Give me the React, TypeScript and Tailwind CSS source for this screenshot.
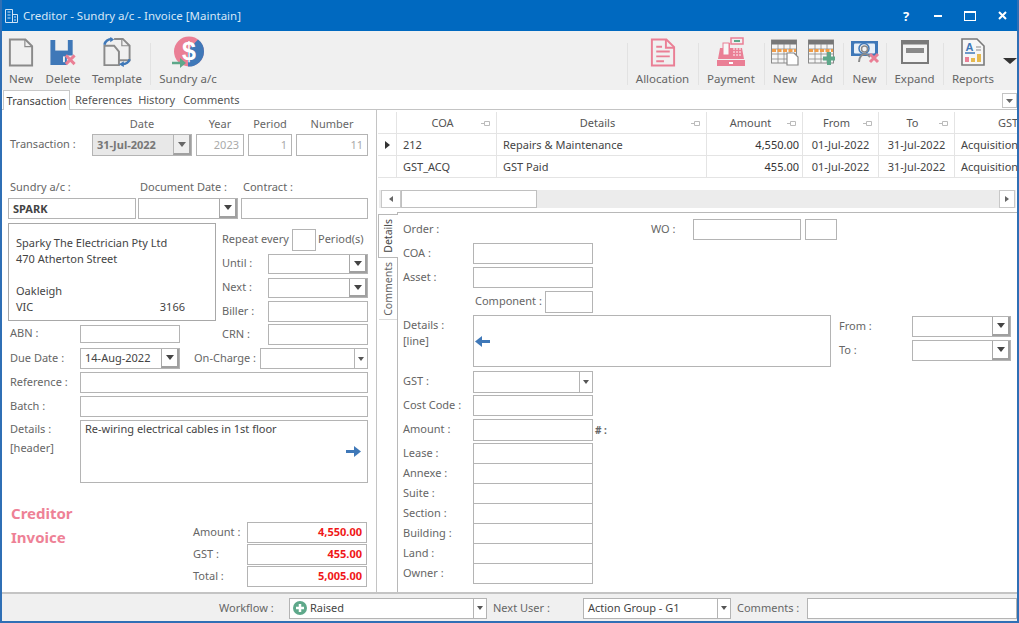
import React from "react";

const Caret = ({ dark = true }: { dark?: boolean }) => (
  <svg width="8" height="5" viewBox="0 0 8 5"><path d="M0 0h8L4 5z" fill={dark ? "#444" : "#666"} /></svg>
);

function Box({ className = "", children }: { className?: string; children?: React.ReactNode }) {
  return <div className={"flex items-center border border-[#b4b4b4] bg-white text-[#444] px-[4px] shrink-0 " + className}>{children}</div>;
}

function Combo({ className = "", text, flat = false, btn = "w-[18px]", textClass = "" }: { className?: string; text?: React.ReactNode; flat?: boolean; btn?: string; textClass?: string }) {
  return (
    <div className={"flex border border-[#b4b4b4] bg-white shrink-0 " + className}>
      <div className={"flex-1 flex items-center px-[4px] min-w-0 text-[#444] whitespace-nowrap " + textClass}>{text}</div>
      {flat ? (
        <div className={"flex items-center justify-center border-l border-[#b4b4b4] bg-white " + btn}><svg width="6" height="4" viewBox="0 0 6 4"><path d="M0 0h6L3 4z" fill="#555" /></svg></div>
      ) : (
        <div className={"flex items-center justify-center border-l border-[#a8a8a8] border-r-2 border-b-2 border-r-[#a0a0a0] border-b-[#a0a0a0] bg-white " + btn}><Caret /></div>
      )}
    </div>
  );
}

const Label = ({ className = "", children }: { className?: string; children: React.ReactNode }) => (
  <div className={"text-[#666] whitespace-nowrap shrink-0 mb-[2px] " + className}>{children}</div>
);

const StatusLabel = ({ className = "", children }: { className?: string; children: React.ReactNode }) => (
  <div className={"text-[#666] whitespace-nowrap shrink-0 " + className}>{children}</div>
);

function Tool({ w, label, sep = false, children }: { w: string; label: string; sep?: boolean; children: React.ReactNode }) {
  return (
    <div className={"relative flex flex-col items-center shrink-0 h-full " + w}>
      {sep && <div className="absolute left-0 top-[12px] h-[42px] w-px bg-[#e2e2e2]" />}
      <div className="h-[34px] mt-[4px] flex items-center justify-center">{children}</div>
      <div className="mt-[2px] text-[#666] text-[11.5px] leading-[16px] whitespace-nowrap">{label}</div>
    </div>
  );
}

const G = "#8a8a8a";
const B = "#3f78b8";
const P = "#ea7f95";
const GR = "#5ea88a";

const IconNew = () => (
  <svg width="26" height="29" viewBox="0 0 26 30" fill="none" stroke={G} strokeWidth="2">
    <path d="M1.500 1.500h16l7 7v20h-23z" /><path d="M17 1.500v7.500h7.500" strokeWidth="1.200" />
  </svg>
);
const IconDelete = () => (
  <svg width="28" height="29" viewBox="0 0 28 30">
    <path d="M1 2h23v16h-6v10H1z" fill={B} />
    <rect x="6" y="2" width="13" height="11" fill="#f0f0f0" />
    <rect x="14" y="19" width="2" height="6" fill="#f0f0f0" />
    <path d="M17 18l9 9M26 18l-9 9" stroke={P} strokeWidth="3" />
  </svg>
);
const IconTemplate = () => (
  <svg width="30" height="31" viewBox="0 0 30 32" fill="none">
    <path d="M4 9h8l5 6v14H2V9z" stroke={G} strokeWidth="2" fill="#f0f0f0" />
    <path d="M12 2h9l7 7v15H17" stroke={G} strokeWidth="2" />
    <path d="M20 2v7h8" stroke={G} strokeWidth="1.200" />
    <path d="M2 8c1-4 4-6 8-6" stroke={B} strokeWidth="2.500" /><path d="M8 0l4 2.500-4 3z" fill={B} />
    <path d="M28 23c-1 4-4 5-8 5" stroke={B} strokeWidth="2.500" /><path d="M22 31l-5-3 5-3z" fill={B} />
  </svg>
);
const IconSundry = () => (
  <svg width="34" height="32" viewBox="0 0 34 32">
    <circle cx="18" cy="15.500" r="15" fill={P} />
    <path d="M33 15.500A15 15 0 0 1 17 30.500L17 14L27 3.500A15 15 0 0 1 33 15.500z" fill={B} />
    <text x="18" y="24" textAnchor="middle" fontSize="25" fontWeight="700" fill="#fff" fontFamily="'Liberation Sans',sans-serif">$</text>
    <path d="M1 27h9" stroke={GR} strokeWidth="2.500" /><path d="M9 22l6 5-6 5z" fill={GR} />
  </svg>
);
const IconAllocation = () => (
  <svg width="26" height="29" viewBox="0 0 26 30" fill="none" stroke={P} strokeWidth="2">
    <path d="M1.500 1.500h15l8 8v19h-23z" /><path d="M16 1.500v8.500h8.500" />
    <path d="M6 9h6M6 14h14M6 19h14M6 24h8" />
  </svg>
);
const IconPayment = () => (
  <svg width="30" height="30" viewBox="0 0 30 30">
    <rect x="15" y="1" width="12" height="6" fill="none" stroke={P} strokeWidth="1.500" />
    <rect x="18" y="3" width="6" height="2" fill={GR} />
    <path d="M4 11h5v-5h5v5h12l2 11H2z" fill={P} />
    <rect x="7" y="6" width="6" height="12" fill="#f7f7f7" stroke={P} />
    <path d="M17 12h8M17 15h8M17 18h8" stroke="#f8d0d8" strokeWidth="1.500" strokeDasharray="2 1" />
    <rect x="1" y="23" width="28" height="6" fill={P} /><rect x="13" y="25" width="4" height="2" fill="#fff" />
  </svg>
);
const CalGrid = () => (
  <>
    <rect x="0.500" y="1" width="25" height="23" fill="#f6f6f6" stroke={G} />
    <rect x="0.500" y="1" width="25" height="4.500" fill="#777" />
    <path d="M7 5v19M13 5v19M19 5v19M1 10h25M1 15h25M1 20h25" stroke={G} strokeWidth="0.800" />
    <path d="M1 11.500h24" stroke="#ef9d4a" strokeWidth="3" strokeDasharray="4 1.500" />
  </>
);
const IconCalNew = () => (
  <svg width="28" height="27" viewBox="0 0 28 27"><CalGrid /><path d="M16 14h7l4 4v8H16z" fill="#fff" stroke={G} strokeWidth="1.200" /></svg>
);
const IconCalAdd = () => (
  <svg width="28" height="27" viewBox="0 0 28 27"><CalGrid /><path d="M21 13v13M15 19.500h12" stroke={GR} strokeWidth="4" /></svg>
);
const IconNote = () => (
  <svg width="30" height="26" viewBox="0 0 30 26">
    <rect x="1" y="2" width="27" height="15" fill={B} />
    <rect x="4" y="4.500" width="21" height="10" rx="1" fill="#e8f0f8" />
    <circle cx="14" cy="9.500" r="5" fill="#f4f4f4" stroke={B} strokeWidth="1.500" />
    <path d="M9 23c0-5 3-8 6-8s4 2 5 3" fill="none" stroke={G} strokeWidth="2" />
    <circle cx="14.500" cy="10" r="3" fill="none" stroke={G} strokeWidth="1.500" />
    <path d="M20 15l8 8M28 15l-8 8" stroke={P} strokeWidth="3" />
  </svg>
);
const IconExpand = () => (
  <svg width="28" height="24" viewBox="0 0 28 24">
    <rect x="1" y="1" width="26" height="22" fill="#f4f4f4" stroke="#7a7a7a" strokeWidth="2" />
    <rect x="1" y="1" width="26" height="3.500" fill="#7a7a7a" />
    <rect x="5" y="8" width="18" height="5" fill="#8a8a8a" />
  </svg>
);
const IconReports = () => (
  <svg width="24" height="28" viewBox="0 0 24 28">
    <path d="M1 1h15l7 7v19H1z" fill="#f6f6f6" stroke="#7a7a7a" strokeWidth="1.600" />
    <text x="8.500" y="13" textAnchor="middle" fontSize="11" fontWeight="700" fill={B} fontFamily="'Liberation Sans',sans-serif">A</text>
    <path d="M4 15h10" stroke={B} strokeWidth="1.500" /><path d="M15 9h5M15 12h5" stroke={G} />
    <rect x="4" y="19" width="4" height="5" fill={P} /><rect x="10" y="20" width="4" height="4" fill="#e6b94f" /><rect x="16" y="16" width="4" height="8" fill="#e6b94f" />
  </svg>
);

const Pin = () => (
  <svg width="10" height="7" viewBox="0 0 10 7" className="absolute right-[5px] top-[8px]" fill="none" stroke="#bbb">
    <path d="M3.500 1.500h5v4h-5zM3.500 3.500H0" />
  </svg>
);

const cols = [
  { n: "COA", w: "w-[100px]" },
  { n: "Details", w: "w-[210px]" },
  { n: "Amount", w: "w-[96px]" },
  { n: "From", w: "w-[76px]" },
  { n: "To", w: "w-[76px]" },
];

const rows = [
  ["212", "Repairs & Maintenance", "4,550.00", "01-Jul-2022", "31-Jul-2022", "Acquisition"],
  ["GST_ACQ", "GST Paid", "455.00", "01-Jul-2022", "31-Jul-2022", "Acquisition"],
];

function Grid() {
  return (
    <div className="h-[66px] overflow-hidden shrink-0">
      <div className="flex h-[22px] border-b border-[#e4e4e4] text-[#555]">
        <div className="w-[19px] border-r border-[#e4e4e4] shrink-0" />
        {cols.map((c) => (
          <div key={c.n} className={"relative flex items-center justify-center border-r border-[#e4e4e4] shrink-0 pr-[8px] " + c.w}>
            {c.n}<Pin />
          </div>
        ))}
        <div className="w-[62px] flex items-center shrink-0 pl-[43px] overflow-hidden">GST</div>
      </div>
      {rows.map((r, i) => (
        <div key={i} className="flex h-[22px] border-b border-[#e4e4e4] text-[#444]">
          <div className="w-[19px] border-r border-[#e4e4e4] shrink-0 flex items-center justify-center">
            {i === 0 && <svg width="5" height="8" viewBox="0 0 5 8"><path d="M0 0l5 4-5 4z" fill="#333" /></svg>}
          </div>
          <div className="w-[100px] border-r border-[#e4e4e4] shrink-0 flex items-center pl-[6px]">{r[0]}</div>
          <div className="w-[210px] border-r border-[#e4e4e4] shrink-0 flex items-center pl-[6px]">{r[1]}</div>
          <div className="w-[96px] border-r border-[#e4e4e4] shrink-0 flex items-center justify-end pr-[3px] text-[#333]">{r[2]}</div>
          <div className="w-[76px] border-r border-[#e4e4e4] shrink-0 flex items-center justify-center">{r[3]}</div>
          <div className="w-[76px] border-r border-[#e4e4e4] shrink-0 flex items-center justify-center">{r[4]}</div>
          <div className="flex-1 flex items-center pl-[6px] whitespace-nowrap">{r[5]}</div>
        </div>
      ))}
    </div>
  );
}

function Scrollbar() {
  return (
    <div className="flex h-[18px] mt-[12px] bg-[#ececec] mx-[1px] shrink-0 items-stretch">
      <div className="w-[20px] ml-[2px] bg-white border border-[#c8c8c8] flex items-center justify-center shrink-0">
        <svg width="4" height="6" viewBox="0 0 4 6"><path d="M4 0L0 3l4 3z" fill="#666" /></svg>
      </div>
      <div className="w-[136px] bg-white border border-[#c0c0c0] shrink-0" />
      <div className="flex-1" />
      <div className="w-[16px] mr-[1px] bg-white border border-[#c8c8c8] flex items-center justify-center shrink-0">
        <svg width="4" height="6" viewBox="0 0 4 6"><path d="M0 0l4 3-4 3z" fill="#666" /></svg>
      </div>
    </div>
  );
}

function LeftForm() {
  return (
    <div className="w-[375px] shrink-0 border-r border-[#c4c4c4] pl-[6px] pr-[8px] h-full overflow-hidden">
      <div className="flex h-[16px] mt-[6px] items-center text-[#666]">
        <div className="w-[84px]" />
        <div className="w-[100px] text-center">Date</div>
        <div className="w-[48px] ml-[4px] text-center">Year</div>
        <div className="w-[44px] ml-[4px] text-center">Period</div>
        <div className="w-[72px] ml-[4px] text-center">Number</div>
      </div>
      <div className="flex h-[22px] mt-[2px] items-center">
        <Label className="w-[84px] pl-[2px]">Transaction :</Label>
        <div className="flex w-[100px] h-[22px] border border-[#b4b4b4] bg-[#e8e8e8] shrink-0">
          <div className="flex-1 flex items-center pl-[4px] font-bold text-[#777]">31-Jul-2022</div>
          <div className="w-[18px] border-l border-[#b4b4b4] border-r-2 border-b-2 border-r-[#a0a0a0] border-b-[#a0a0a0] flex items-center justify-center bg-[#eeeeee]"><Caret dark={false} /></div>
        </div>
        <Box className="w-[48px] h-[22px] ml-[4px] justify-end text-[#aaa]">2023</Box>
        <Box className="w-[44px] h-[22px] ml-[4px] justify-end text-[#aaa]">1</Box>
        <Box className="w-[72px] h-[22px] ml-[4px] justify-end text-[#aaa]">11</Box>
      </div>
      <div className="flex h-[14px] mt-[24px] items-center text-[#666]">
        <div className="w-[132px] pl-[2px]">Sundry a/c :</div>
        <div className="w-[103px]">Document Date :</div>
        <div>Contract :</div>
      </div>
      <div className="flex h-[21px] mt-[4px]">
        <Box className="w-[128px] font-bold text-[#333]">SPARK</Box>
        <Combo className="w-[100px] ml-[2px]" />
        <Box className="w-[127px] ml-[3px]" />
      </div>
      <div className="flex mt-[4px] h-[122px]">
        <div className="w-[208px] shrink-0">
          <div className="h-[98px] border border-[#a8a8a8] px-[7px] pt-[11px] text-[#444] leading-[16px]">
            <div>Sparky The Electrician Pty Ltd</div>
            <div>470 Atherton Street</div>
            <div className="h-[16px]" />
            <div>Oakleigh</div>
            <div className="flex w-[169px] justify-between"><span>VIC</span><span>3166</span></div>
          </div>
          <div className="flex mt-[4px] h-[18px] items-center">
            <Label className="w-[72px] pl-[2px]">ABN :</Label>
            <Box className="w-[100px] h-[18px]" />
          </div>
        </div>
        <div className="w-[152px] ml-[-2px] pl-[8px] shrink-0 flex flex-col">
          <div className="flex items-center h-[22px] mt-[6px]">
            <Label className="w-[70px]">Repeat every</Label>
            <Box className="w-[24px] h-[22px]" />
            <Label className="ml-[2px]">Period(s)</Label>
          </div>
          <div className="flex items-center h-[20px] mt-[3px]">
            <Label className="w-[46px]">Until :</Label>
            <Combo className="w-[100px] h-[20px]" />
          </div>
          <div className="flex items-center h-[20px] mt-[4px]">
            <Label className="w-[46px]">Next :</Label>
            <Combo className="w-[100px] h-[20px]" />
          </div>
          <div className="flex items-center h-[21px] mt-[3px]">
            <Label className="w-[46px]">Biller :</Label>
            <Box className="w-[100px] h-[21px]" />
          </div>
          <div className="flex items-center h-[21px] mt-[2px]">
            <Label className="w-[46px]">CRN :</Label>
            <Box className="w-[100px] h-[21px]" />
          </div>
        </div>
      </div>
      <div className="flex h-[21px] mt-[3px] items-center">
        <Label className="w-[72px] pl-[2px]">Due Date :</Label>
        <Combo className="w-[100px] h-[21px]" text="14-Aug-2022" textClass="pb-[2px]" />
        <Label className="w-[66px] ml-[14px]">On-Charge :</Label>
        <Combo className="w-[108px] h-[21px]" flat btn="w-[13px]" />
      </div>
      <div className="flex h-[21px] mt-[3px] items-center">
        <Label className="w-[72px] pl-[2px]">Reference :</Label>
        <Box className="w-[288px] h-[21px]" />
      </div>
      <div className="flex h-[21px] mt-[3px] items-center">
        <Label className="w-[72px] pl-[2px]">Batch :</Label>
        <Box className="w-[288px] h-[21px]" />
      </div>
      <div className="flex h-[63px] mt-[3px]">
        <div className="w-[72px] pl-[2px] text-[#666] shrink-0 -mt-[1px] leading-[19px]"><div>Details :</div><div>[header]</div></div>
        <div className="relative w-[288px] border border-[#b4b4b4] px-[4px] py-[1px] text-[#444]">
          Re-wiring electrical cables in 1st floor
          <svg width="15" height="11" viewBox="0 0 15 11" className="absolute right-[6px] top-[25px]"><path d="M0 5.500h10" stroke={B} strokeWidth="3" /><path d="M8 0l7 5.500-7 5.500z" fill={B} /></svg>
        </div>
      </div>
      <div className="flex mt-[18px]">
        <div className="w-[185px] shrink-0 pl-[3px] -mt-[1px] text-[15px] font-bold text-[#ee8196] leading-[24px]"><div className="mt-[1px]">Creditor</div><div>Invoice</div></div>
        <div className="flex flex-col pt-[21px] gap-[1px]">
          {[["Amount :", "4,550.00"], ["GST :", "455.00"], ["Total :", "5,005.00"]].map(([l, v]) => (
            <div key={l} className="flex items-center h-[21px]">
              <Label className="w-[54px]">{l}</Label>
              <Box className="w-[120px] h-[21px] justify-end font-bold pb-[2px] px-[3px]"><span className="text-[#f01818]">{v}</span></Box>
            </div>
          ))}
        </div>
      </div>
    </div>
  );
}

function RightForm() {
  const stack = ["Lease :", "Annexe :", "Suite :", "Section :", "Building :", "Land :", "Owner :"];
  return (
    <div className="flex flex-1 min-h-0 mt-[4px]">
      <div className="w-[19px] shrink-0 pt-[2px] flex flex-col items-end">
        <div className="w-[20px] h-[44px] border border-r-0 border-[#b8b8b8] bg-white flex items-center justify-center relative z-10 translate-x-[1px] text-[#444] text-[10.5px]">
          <span className="[writing-mode:vertical-rl] rotate-180 leading-none">Details</span>
        </div>
        <div className="w-[18px] h-[62px] flex items-center justify-center text-[#666] border-b border-[#dcdcdc] text-[10.5px]">
          <span className="[writing-mode:vertical-rl] rotate-180 leading-none">Comments</span>
        </div>
      </div>
      <div className="flex-1 border-l border-t border-[#b8b8b8] pl-[5px] pt-[6px] min-w-0">
        <div className="flex h-[21px] items-center">
          <Label className="w-[248px]">Order :</Label>
          <Label className="w-[42px]">WO :</Label>
          <Box className="w-[108px] h-[21px]" />
          <Box className="w-[32px] h-[21px] ml-[4px]" />
        </div>
        <div className="flex h-[21px] items-center mt-[3px]">
          <Label className="w-[70px]">COA :</Label>
          <Box className="w-[120px] h-[21px]" />
        </div>
        <div className="flex h-[21px] items-center mt-[3px]">
          <Label className="w-[70px]">Asset :</Label>
          <Box className="w-[120px] h-[21px]" />
        </div>
        <div className="flex h-[22px] items-center mt-[3px]">
          <Label className="w-[70px] ml-[72px]">Component :</Label>
          <Box className="w-[48px] h-[22px]" />
        </div>
        <div className="flex mt-[2px] h-[52px]">
          <div className="w-[70px] shrink-0 text-[#666] leading-[16px] pt-[2px]"><div>Details :</div><div>[line]</div></div>
          <div className="relative w-[358px] h-[52px] border border-[#b4b4b4] shrink-0">
            <svg width="15" height="11" viewBox="0 0 15 11" className="absolute left-[1px] top-[20px]"><path d="M5 5.500h10" stroke={B} strokeWidth="3" /><path d="M7 0L0 5.500 7 11z" fill={B} /></svg>
          </div>
          <div className="ml-[8px] flex flex-col">
            <div className="flex items-center h-[21px] mt-[1px]">
              <Label className="w-[73px]">From :</Label>
              <Combo className="w-[99px] h-[21px]" />
            </div>
            <div className="flex items-center h-[21px] mt-[3px]">
              <Label className="w-[73px]">To :</Label>
              <Combo className="w-[99px] h-[21px]" />
            </div>
          </div>
        </div>
        <div className="flex h-[22px] items-center mt-[4px]">
          <Label className="w-[70px]">GST :</Label>
          <Combo className="w-[120px] h-[22px]" flat btn="w-[13px]" />
        </div>
        <div className="flex h-[21px] items-center mt-[2px]">
          <Label className="w-[70px]">Cost Code :</Label>
          <Box className="w-[120px] h-[21px]" />
        </div>
        <div className="flex h-[22px] items-center mt-[3px]">
          <Label className="w-[70px]">Amount :</Label>
          <Box className="w-[120px] h-[22px]" />
          <StatusLabel className="ml-[2px] text-[10px] font-bold">#&nbsp;:</StatusLabel>
        </div>
        <div className="mt-[2px]">
          {stack.map((l) => (
            <div key={l} className="flex h-[20px] items-center">
              <StatusLabel className="w-[70px]">{l}</StatusLabel>
              <Box className="w-[120px] h-[21px]" />
            </div>
          ))}
        </div>
      </div>
    </div>
  );
}

export default function App() {
  return (
    <div className="w-[1019px] h-[623px] flex flex-col overflow-hidden bg-white text-[11px] leading-[14px] font-['Noto_Sans',sans-serif] border-x-2 border-b-2 border-[#2f6fb5]">
      <div className="h-[31px] -mx-[2px] bg-[#0069c0] flex items-center shrink-0 pl-[5px]">
        <svg width="13" height="14" viewBox="0 0 13 14" fill="none" stroke="#cfe2f4"><path d="M.5 13.500v-13h7v13M7.500 5.500h5v8h-12M2.500 3h3M2.500 6h3M2.500 9h3M9 8h2M9 11h2" /></svg>
        <div className="ml-[5px] text-[11.5px] text-[#d5e6f6]">Creditor - Sundry a/c - Invoice [Maintain]</div>
        <div className="flex-1" />
        <div className="flex items-center text-white font-bold">
          <div className="w-[32px] text-center text-[13px]">?</div>
          <div className="w-[32px] flex justify-center"><div className="w-[8px] h-[2px] bg-white" /></div>
          <div className="w-[32px] flex justify-center"><div className="w-[12px] h-[10px] border border-t-2 border-white" /></div>
          <div className="w-[32px] flex justify-center mr-[1px]"><svg width="9" height="9" viewBox="0 0 9 9"><path d="M1 1l7 7M8 1l-7 7" stroke="#fff" strokeWidth="2" /></svg></div>
        </div>
      </div>
      <div className="h-[59px] bg-[#f0f0f0] flex shrink-0 items-stretch">
        <div className="w-[2px] shrink-0" />
        <Tool w="w-[34px]" label="New"><IconNew /></Tool>
        <Tool w="w-[50px]" label="Delete"><IconDelete /></Tool>
        <Tool w="w-[58px]" label="Template"><IconTemplate /></Tool>
        <div className="w-[4px]" />
        <Tool w="w-[76px]" label="Sundry a/c" sep><IconSundry /></Tool>
        <div className="flex-1" />
        <Tool w="w-[71px]" label="Allocation" sep><IconAllocation /></Tool>
        <Tool w="w-[66px]" label="Payment" sep><IconPayment /></Tool>
        <Tool w="w-[42px]" label="New" sep><IconCalNew /></Tool>
        <Tool w="w-[32px]" label="Add"><IconCalAdd /></Tool>
        <div className="w-[5px]" />
        <Tool w="w-[43px]" label="New" sep><IconNote /></Tool>
        <Tool w="w-[57px]" label="Expand" sep><IconExpand /></Tool>
        <Tool w="w-[60px]" label="Reports" sep><IconReports /></Tool>
        <div className="w-[14px] shrink-0 flex justify-center pt-[27px]"><svg width="14" height="6" viewBox="0 0 14 6"><path d="M0 0h14L7 6z" fill="#333" /></svg></div>
      </div>
      <div className="h-[20px] flex items-stretch border-b border-[#c4c4c4] shrink-0 bg-white text-[#555] relative">
        <div className="ml-[1px] w-[67px] border border-b-0 border-[#c8c8c8] bg-white flex items-center justify-center text-[#444] h-[20px]">Transaction</div>
        <div className="ml-[5px] flex items-center">References</div>
        <div className="ml-[6px] flex items-center">History</div>
        <div className="ml-[8px] flex items-center">Comments</div>
        <div className="flex-1" />
        <div className="w-[15px] h-[15px] mt-[3px] border border-[#c4c4c4] flex items-center justify-center"><svg width="7" height="4" viewBox="0 0 7 4"><path d="M0 0h7L3.500 4z" fill="#666" /></svg></div>
      </div>
      <div className="flex flex-1 min-h-0">
        <LeftForm />
        <div className="flex-1 min-w-0 flex flex-col overflow-hidden pl-[1px] pt-[2px]">
          <Grid />
          <Scrollbar />
          <RightForm />
        </div>
      </div>
      <div className="h-[29px] bg-[#f0f0f0] border-t-2 border-[#c4c4c4] shrink-0 flex items-center text-[#666] pt-[1px]">
        <StatusLabel className="ml-[217px] w-[70px]">Workflow :</StatusLabel>
        <Combo className="w-[198px] h-[21px]" flat btn="w-[13px]" text={
          <span className="flex items-center gap-[3px] -ml-[1px]">
            <svg width="14" height="14" viewBox="0 0 14 14"><circle cx="7" cy="7" r="7" fill={GR} /><path d="M7 3v8M3 7h8" stroke="#fff" strokeWidth="2.500" /></svg>
            Raised
          </span>
        } />
        <StatusLabel className="ml-[6px] w-[90px]">Next User :</StatusLabel>
        <Combo className="w-[148px] h-[21px]" flat btn="w-[13px]" text="Action Group - G1" />
        <StatusLabel className="ml-[6px] w-[70px]">Comments :</StatusLabel>
        <Box className="w-[210px] h-[21px]" />
      </div>
    </div>
  );
}
